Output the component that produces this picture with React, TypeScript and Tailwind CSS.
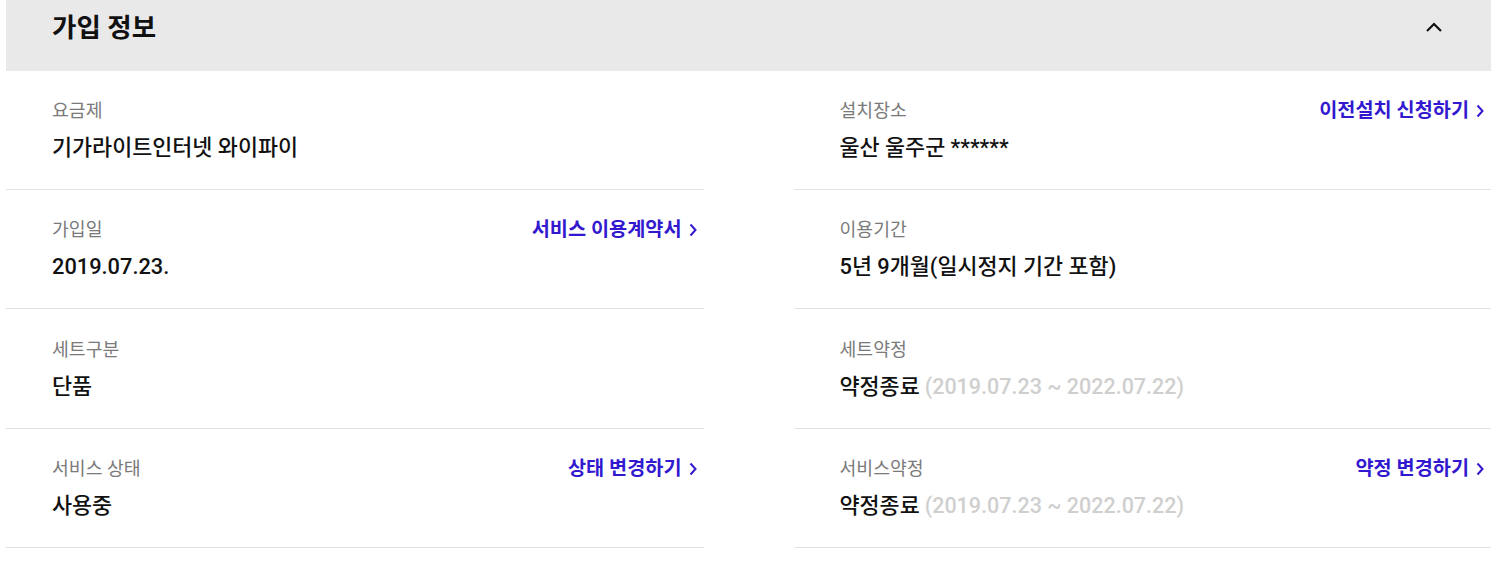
import React from "react";

const font = {
  fontFamily: 'Roboto, "Noto Sans CJK KR", "Noto Sans", sans-serif',
};

function Chevron() {
  return (
    <svg width="8" height="14" viewBox="0 0 8 14" className="ml-[7px]" fill="none">
      <path d="M1.5 1.5 L6.5 7 L1.5 12.5" stroke="#3219cf" strokeWidth="2" />
    </svg>
  );
}

type Item = {
  label: string;
  value: string;
  sub?: string;
  link?: string;
  tall?: boolean;
};

function Row({ item }: { item: Item }) {
  return (
    <div
      className={`flex flex-col justify-center border-b border-[#e3e3e3] pl-[46px] pr-[7px] ${
        item.tall ? "h-[120px]" : "h-[119px]"
      }`}
    >
      <div className="flex items-center justify-between">
        <span className="text-[18.3px] leading-[26px] text-[#7a7a7a]">{item.label}</span>
        {item.link && (
          <span className="flex items-center text-[19.7px] font-bold leading-[26px] text-[#3219cf]">
            {item.link}
            <Chevron />
          </span>
        )}
      </div>
      <div className="mt-[10px] text-[21.8px] font-medium leading-[28px] text-[#111]">
        {item.value}
        {item.sub && <span className="ml-[5px] text-[21.5px] text-[#cfcfcf]">{item.sub}</span>}
      </div>
    </div>
  );
}

const left: Item[] = [
  { label: "요금제", value: "기가라이트인터넷 와이파이" },
  { label: "가입일", value: "2019.07.23.", link: "서비스 이용계약서" },
  { label: "세트구분", value: "단품", tall: true },
  { label: "서비스 상태", value: "사용중", link: "상태 변경하기" },
];

const right: Item[] = [
  { label: "설치장소", value: "울산 울주군 ******", link: "이전설치 신청하기" },
  { label: "이용기간", value: "5년 9개월(일시정지 기간 포함)" },
  { label: "세트약정", value: "약정종료", sub: "(2019.07.23 ~ 2022.07.22)", tall: true },
  { label: "서비스약정", value: "약정종료", sub: "(2019.07.23 ~ 2022.07.22)", link: "약정 변경하기" },
];

export default function App() {
  return (
    <div className="min-h-[561px] bg-white" style={font}>
      <div className="ml-[6px] w-[1485px]">
        <div className="flex h-[71px] items-start justify-between bg-[#e9e9e9] pl-[46px] pr-[48px]">
          <h2 className="mt-[10px] text-[26.5px] font-bold leading-[36px] text-[#111]">가입 정보</h2>
          <svg width="18" height="12" viewBox="0 0 18 12" className="mt-[21px]" fill="none">
            <path d="M2 10 L9 3 L16 10" stroke="#111" strokeWidth="2.2" />
          </svg>
        </div>
        <div className="grid grid-cols-2 gap-x-[90px]">
          <div>
            {left.map((it) => (
              <Row key={it.label} item={it} />
            ))}
          </div>
          <div>
            {right.map((it) => (
              <Row key={it.label} item={it} />
            ))}
          </div>
        </div>
      </div>
    </div>
  );
}
